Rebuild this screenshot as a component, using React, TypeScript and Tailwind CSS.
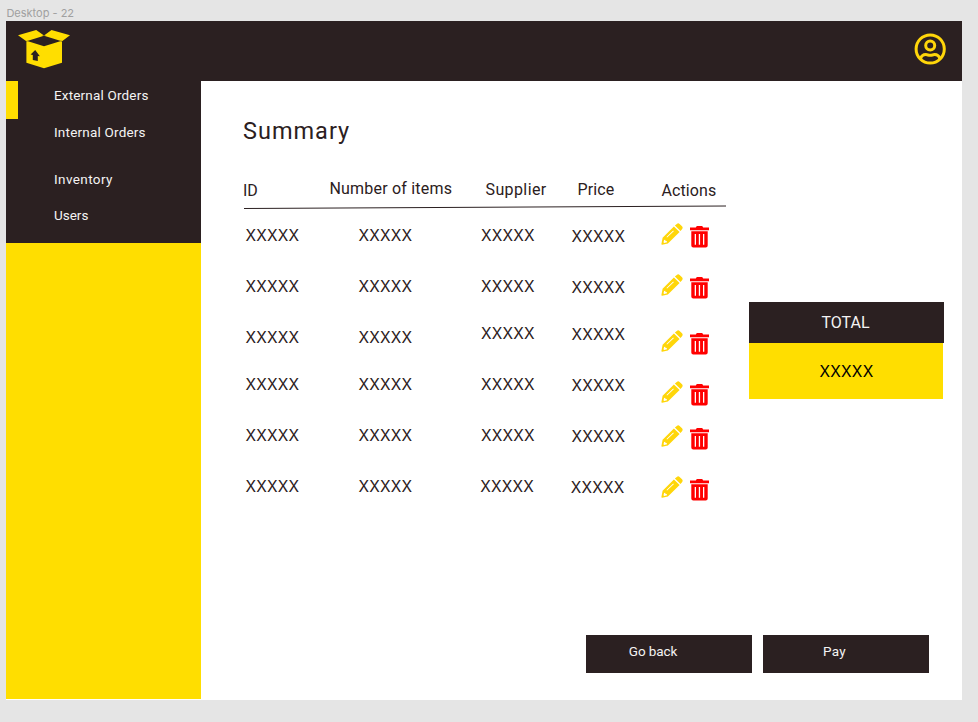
import React from 'react';

function BoxLogo() {
  return (
    <svg className="ml-3 mt-[9px] h-[39px] w-[52px]" viewBox="0 0 52 39">
      <path fill="#ffde00" d="M0 5.3 18.2 0 26 5.5 33.5 0 52 5.3 44 11.3V32.8L26 38.2 8.4 32.8V11.3Z" />
      <path fill="#2b2021" d="M9.2 11 26 5.8 43 11 26 16.2Z" />
      <path fill="none" stroke="#2b2021" strokeWidth=".5" d="M8.4 11.3 9.5 11M42.5 11 44 11.3M24.5 5.8 26 5 27.5 5.8" />
      <path fill="#2b2021" d="m17.2 20 4.7 6.2-2.1-.3v5l-5-.8v-5l-2.2-.6Z" />
    </svg>
  );
}

function UserIcon() {
  return (
    <svg className="mr-4 mt-[12px] size-8" viewBox="0 0 32 32" fill="none" stroke="#ffd60a" strokeWidth="3">
      <circle cx="16.2" cy="16" r="14.1" />
      <circle cx="16.2" cy="12.4" r="4.5" />
      <path d="M6.5 26c.8-3 2.7-4.4 5.4-4.4 1.7 0 2.4.7 4.3.7s2.6-.7 4.3-.7c2.7 0 4.6 1.4 5.4 4.4" />
    </svg>
  );
}

function Pencil() {
  return (
    <svg className="size-[22px]" viewBox="0 0 22 22" fill="#ffd60a">
      <path d="M13.9 2.5 15.8.9q1.5-1.2 2.8.1l2.4 2.3q1.2 1.3.2 2.7l-1.7 2Z" />
      <path fillRule="evenodd" d="M12.9 3.4 18.6 9 6.9 20.4l-5.7 1.4q-.9.1-.8-.8l1.2-6.3Zm-.7 4.2-6.7 6.3.6.6 6.7-6.3ZM3.1 17l-.6 2.3.6.6 2.9-.7-.3-1.3-1.4-.1-.1-1.1Z" />
    </svg>
  );
}

function Trash() {
  return (
    <svg className="h-[22px] w-[19px]" viewBox="0 0 19 22" fill="#f00">
      <path d="M0 1.5h5.8L6.8 0h5.4l1 1.5H19v2.7H0Z" />
      <path fillRule="evenodd" d="M1.3 5.2h16.4v14.4q0 2-2 2H3.3q-2 0-2-2ZM4.7 8v10.7H6V8Zm4.1 0v10.7h1.3V8Zm4.2 0v10.7h1.3V8Z" />
    </svg>
  );
}

const cell = "font-['Inter',sans-serif] font-normal text-[15.5px] leading-5 tracking-[0.2px] text-[#2b2021]";

const rows = [
  { height: 'h-[51px]', supplier: '', price: 'pt-px', pencil: '', trash: '' },
  { height: 'h-[51px]', supplier: '', price: 'pt-px', pencil: '', trash: '' },
  { height: 'h-[47px]', supplier: '-mt-1', price: '-mt-[3px]', pencil: 'mt-[5px]', trash: 'mt-[5px]' },
  { height: 'h-[51px]', supplier: '', price: 'pt-px', pencil: 'mt-[9px]', trash: 'mt-[9px]' },
  { height: 'h-[51px]', supplier: '', price: 'pt-px', pencil: 'mt-[2px]', trash: 'mt-[2px]' },
  { height: 'h-[51px]', supplier: '-ml-[0.6px]', price: 'pt-px -ml-[0.6px]', pencil: 'mt-[2px]', trash: 'mt-[2px]' },
];

function Sidebar() {
  return (
    <aside className="flex h-[618px] w-[195px] flex-col bg-[#ffde00]">
      <nav className="flex h-[162px] bg-[#2b2021] text-[13.5px] leading-5 text-[#f4f3f3]">
        <div className="h-[38px] w-[12px] bg-[#ffde00]" />
        <ul className="flex flex-col pl-[35.6px] pt-1">
          <li className="tracking-[0.17px]">External Orders</li>
          <li className="mt-[17px] tracking-[0.2px]">Internal Orders</li>
          <li className="mt-[27px] tracking-[0.4px]">Inventory</li>
          <li className="mt-4">Users</li>
        </ul>
      </nav>
    </aside>
  );
}

function OrdersTable() {
  return (
    <section className="w-[484px]">
      <div className="grid h-[25px] grid-cols-[86.5px_156px_92px_84px_66px] text-base leading-5 text-[#2b2021]">
        <span className="pt-[2px]">ID</span>
        <span className="tracking-[0.2px]">Number of items</span>
        <span className="pt-px tracking-[0.4px]">Supplier</span>
        <span className="pt-px tracking-[0.15px]">Price</span>
        <span className="pt-[2px] tracking-[0.1px]">Actions</span>
      </div>
      <svg className="ml-px h-[6px] w-[483px]" viewBox="0 0 483 6">
        <path d="M0 4.5 482 2" stroke="#2b2021" strokeWidth="1" />
      </svg>
      <div className="pl-[2.4px] pt-[13px]">
        {rows.map((row, i) => (
          <div key={i} className={`grid grid-cols-[113px_122.5px_90.5px_89.6px_29px_20px] items-start ${row.height}`}>
            <span className={`${cell} pt-[3px]`}>XXXXX</span>
            <span className={`${cell} pt-[3px]`}>XXXXX</span>
            <div className={`pt-[3px] ${row.supplier}`}><span className={`block ${cell}`}>XXXXX</span></div>
            <div className="pt-[3px]"><span className={`block ${cell} ${row.price}`}>XXXXX</span></div>
            <div className={row.pencil}><Pencil /></div>
            <div className={`pt-[3px] ${row.trash}`}><Trash /></div>
          </div>
        ))}
      </div>
    </section>
  );
}

export default function App() {
  return (
    <div className="h-[722px] w-[978px] overflow-hidden bg-[#e5e5e5] pl-[6.4px] font-['Roboto',sans-serif]">
      <div className="h-[21px] pt-[5px] font-['Inter',sans-serif] text-[11px] leading-4 text-[#a0a0a0]">Desktop - 22</div>
      <div className="h-[679px] w-[955.6px] bg-white">
        <header className="flex h-[60px] items-start justify-between bg-[#2b2021]">
          <BoxLogo />
          <UserIcon />
        </header>
        <div className="flex h-[619px]">
          <Sidebar />
          <main className="flex flex-1 flex-col pl-[41.6px]">
            <h1 className="mt-[35px] h-[63px] text-[23.5px] leading-[30px] tracking-[1px] text-[#2b2021]">Summary</h1>
            <div className="flex h-[456px]">
              <OrdersTable />
              <div className="ml-[22px] mt-[123px] w-[195px] text-center text-base">
                <div className="h-[41px] bg-[#2b2021] pr-[2px] pt-[11px] leading-5 text-[#f4f3f3]">TOTAL</div>
                <div className="h-[56px] w-[194px] bg-[#ffde00] pl-px pt-[19px] font-['Inter',sans-serif] text-[15.5px] leading-5 tracking-[0.2px] text-black">XXXXX</div>
              </div>
            </div>
            <div className="ml-[343px] flex gap-[11px] text-[13.5px] leading-5 text-[#f4f3f3]">
              <button className="h-[38px] w-[166px] bg-[#2b2021] pb-[6px] pr-8 tracking-[-0.1px]">Go back</button>
              <button className="h-[38px] w-[166px] bg-[#2b2021] pb-[6px] pr-[23px] tracking-[0.3px]">Pay</button>
            </div>
          </main>
        </div>
      </div>
    </div>
  );
}
